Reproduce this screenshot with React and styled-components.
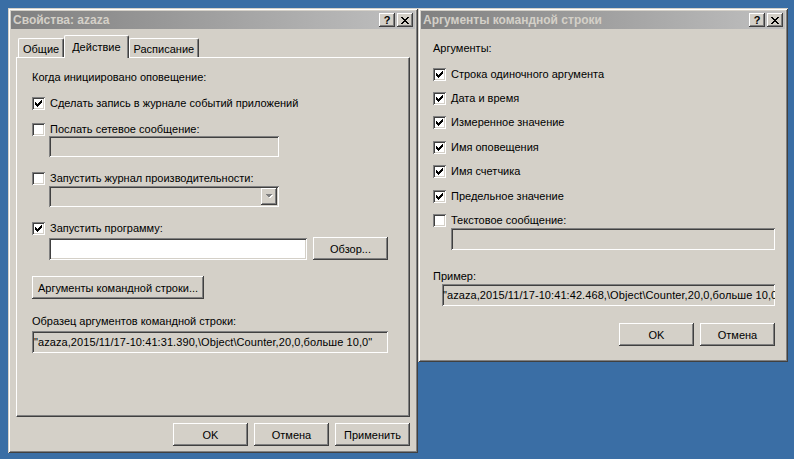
import React from 'react';
import styled, { createGlobalStyle } from 'styled-components';

const FACE = '#d4d0c8';
const RAISED = `inset -1px -1px #404040, inset 1px 1px #ffffff, inset -2px -2px #808080, inset 2px 2px ${FACE}`;
const SUNKEN = `inset 1px 1px #808080, inset -1px -1px #ffffff, inset 2px 2px #404040, inset -2px -2px ${FACE}`;

const GlobalStyle = createGlobalStyle`
  html, body { margin: 0; padding: 0; }
  body {
    background: #3a6ea5;
    font-family: "Liberation Sans", Arial, sans-serif;
    font-size: 11px;
    color: #000;
  }
`;

const Desktop = styled.div`
  display: flex;
  align-items: flex-start;
  width: 794px;
  height: 459px;
  box-sizing: border-box;
  padding: 8px 0 0 8px;
  background: #3a6ea5;
  overflow: hidden;
`;

const Win = styled.div`
  width: ${p => p.$w}px;
  height: ${p => p.$h}px;
  flex-shrink: 0;
  box-sizing: border-box;
  padding: 3px;
  background: ${FACE};
  box-shadow: inset 1px 1px ${FACE}, inset -1px -1px #404040, inset 2px 2px #ffffff, inset -2px -2px #808080;
  display: flex;
  flex-direction: column;
`;

const TitleBar = styled.div`
  height: 18px;
  flex-shrink: 0;
  display: flex;
  align-items: center;
  padding: 0 2px 0 2px;
  background: linear-gradient(to right, #808080, #c0c0c0);
`;

const Title = styled.span`
  flex: 1;
  font-weight: bold;
  font-size: 12px;
  color: ${FACE};
  white-space: nowrap;
`;

const CapButton = styled.div`
  width: 16px;
  height: 14px;
  box-sizing: border-box;
  margin-left: ${p => p.$gap || 0}px;
  background: ${FACE};
  box-shadow: ${RAISED};
  display: flex;
  align-items: center;
  justify-content: center;
  font-weight: bold;
  font-size: 11px;
  line-height: 14px;
`;

const Body = styled.div`
  flex: 1;
  display: flex;
  flex-direction: column;
  align-items: ${p => p.$align || 'stretch'};
  padding: ${p => p.$pad};
`;

const TabStrip = styled.div`
  display: flex;
  align-items: flex-end;
  height: 22px;
  margin-top: 6px;
  padding-left: 2px;
`;

const Tab = styled.div`
  position: relative;
  z-index: ${p => (p.$active ? 2 : 1)};
  box-sizing: border-box;
  height: ${p => (p.$active ? 23 : 19)}px;
  margin-bottom: ${p => (p.$active ? -1 : 0)}px;
  padding: ${p => (p.$active ? '5px 7px 0' : '4px 4px 0')};
  line-height: 13px;
  background: ${FACE};
  border-top: 1px solid #ffffff;
  border-left: 1px solid #ffffff;
  border-right: 1px solid #404040;
  border-radius: 2px 2px 0 0;
  box-shadow: inset -1px 0 #808080;
  white-space: nowrap;
`;

const TabPanel = styled.div`
  height: 360px;
  box-sizing: border-box;
  display: flex;
  flex-direction: column;
  align-items: flex-start;
  padding: 13px 0 0 15px;
  border-top: 1px solid #ffffff;
  border-left: 1px solid #ffffff;
  border-right: 1px solid #404040;
  border-bottom: 1px solid #404040;
  box-shadow: inset -1px -1px #808080;
`;

const Label = styled.div`
  line-height: 13px;
  height: 13px;
  margin-top: ${p => p.$mt || 0}px;
  white-space: nowrap;
`;

const CheckRow = styled.div`
  display: flex;
  align-items: center;
  gap: 5px;
  height: 13px;
  line-height: 13px;
  margin-top: ${p => p.$mt || 0}px;
  white-space: nowrap;
`;

const Box = styled.span`
  width: 13px;
  height: 13px;
  flex-shrink: 0;
  box-sizing: border-box;
  background: #ffffff;
  box-shadow: ${SUNKEN};
  display: flex;
  align-items: center;
  justify-content: center;
`;

const Field = styled.div`
  width: ${p => p.$w}px;
  height: ${p => p.$h || 22}px;
  flex-shrink: 0;
  box-sizing: border-box;
  margin-top: ${p => p.$mt || 0}px;
  margin-left: ${p => p.$indent || 0}px;
  padding: ${p => p.$pad || '0 0 0 2px'};
  background: ${p => (p.$white ? '#ffffff' : FACE)};
  box-shadow: ${SUNKEN};
  display: flex;
  align-items: center;
  justify-content: ${p => p.$justify || 'flex-start'};
  overflow: hidden;
  white-space: nowrap;
  letter-spacing: 0.08px;
`;

const DropButton = styled.div`
  width: 16px;
  height: 100%;
  box-sizing: border-box;
  background: ${FACE};
  box-shadow: ${RAISED};
  display: flex;
  align-items: center;
  justify-content: center;
`;

const Row = styled.div`
  display: flex;
  align-items: center;
  gap: 6px;
  margin-top: ${p => p.$mt || 0}px;
`;

const Button = styled.div`
  width: ${p => p.$w || 75}px;
  height: 23px;
  flex-shrink: 0;
  box-sizing: border-box;
  margin-top: ${p => p.$mt || 0}px;
  background: ${FACE};
  box-shadow: ${RAISED};
  display: flex;
  align-items: center;
  justify-content: center;
  white-space: nowrap;
`;

const ButtonRow = styled.div`
  display: flex;
  justify-content: flex-end;
  gap: 6px;
  align-self: stretch;
  margin-top: ${p => p.$mt || 0}px;
`;

const CheckMark = () => (
  <svg width="7" height="7" viewBox="0 0 7 7" shapeRendering="crispEdges">
    {[2, 3, 4, 3, 2, 1, 0].map((y, x) => (
      <rect key={x} x={x} y={y} width="1" height="3" fill="#000" />
    ))}
  </svg>
);

const CloseGlyph = () => (
  <svg width="8" height="7" viewBox="0 0 8 7" shapeRendering="crispEdges">
    {[[0, 6], [1, 5], [2, 4], [3, 3], [2, 4], [1, 5], [0, 6]].map(([a, b], y) => (
      <g key={y}>
        <rect x={a} y={y} width="2" height="1" fill="#000" />
        {a !== b && <rect x={b} y={y} width="2" height="1" fill="#000" />}
      </g>
    ))}
  </svg>
);

const DownArrow = () => (
  <svg width="8" height="5" viewBox="0 0 8 5" shapeRendering="crispEdges">
    <path d="M1 1h7L4.5 4.5z" fill="#ffffff" />
    <path d="M0 0h7L3.5 3.5z" fill="#808080" />
  </svg>
);

const Check = ({ checked, children, mt }) => (
  <CheckRow $mt={mt}>
    <Box>{checked && <CheckMark />}</Box>
    <span>{children}</span>
  </CheckRow>
);

const Caption = ({ children }) => (
  <TitleBar>
    <Title>{children}</Title>
    <CapButton>?</CapButton>
    <CapButton $gap={2}><CloseGlyph /></CapButton>
  </TitleBar>
);

const PropertiesDialog = () => (
  <Win $w={410} $h={445}>
    <Caption>Свойства: azaza</Caption>
    <Body $pad="0 5px 0 5px">
      <TabStrip>
        <Tab>Общие</Tab>
        <Tab $active>Действие</Tab>
        <Tab>Расписание</Tab>
      </TabStrip>
      <TabPanel>
        <Label>Когда инициировано оповещение:</Label>
        <Check checked mt={13}>Сделать запись в журнале событий приложений</Check>
        <Check mt={13}>Послать сетевое сообщение:</Check>
        <Field $w={230} $h={21} $indent={17} />
        <Check mt={15}>Запустить журнал производительности:</Check>
        <Field $w={230} $h={21} $indent={17} $mt={1} $pad="2px" $justify="flex-end">
          <DropButton><DownArrow /></DropButton>
        </Field>
        <Check checked mt={15}>Запустить программу:</Check>
        <Row $mt={2}>
          <Field $w={258} $indent={17} $white />
          <Button>Обзор...</Button>
        </Row>
        <Button $w={172} $mt={16}>Аргументы командной строки...</Button>
        <Label $mt={16}>Образец аргументов командной строки:</Label>
        <Field $w={356} $mt={3}>"azaza,2015/11/17-10:41:31.390,\Object\Counter,20,0,больше 10,0"</Field>
      </TabPanel>
      <ButtonRow $mt={6}>
        <Button>OK</Button>
        <Button>Отмена</Button>
        <Button>Применить</Button>
      </ButtonRow>
    </Body>
  </Win>
);

const args = [
  { text: 'Строка одиночного аргумента', mt: 13 },
  { text: 'Дата и время', mt: 11 },
  { text: 'Измеренное значение', mt: 11 },
  { text: 'Имя оповещения', mt: 12 },
  { text: 'Имя счетчика', mt: 11 },
  { text: 'Предельное значение', mt: 12 },
];

const ArgumentsDialog = () => (
  <Win $w={370} $h={354}>
    <Caption>Аргументы командной строки</Caption>
    <Body $pad="13px 10px 0 12px" $align="flex-start">
      <Label>Аргументы:</Label>
      {args.map(a => (
        <Check key={a.text} checked mt={a.mt}>{a.text}</Check>
      ))}
      <Check mt={11}>Текстовое сообщение:</Check>
      <Field $w={324} $indent={18} $mt={1} />
      <Label $mt={20}>Пример:</Label>
      <Field $w={333} $indent={9} $mt={1} $pad="0 0 0 1px">"azaza,2015/11/17-10:41:42.468,\Object\Counter,20,0,больше 10,0"</Field>
      <ButtonRow $mt={17}>
        <Button>OK</Button>
        <Button>Отмена</Button>
      </ButtonRow>
    </Body>
  </Win>
);

export default function App() {
  return (
    <>
      <GlobalStyle />
      <Desktop>
        <PropertiesDialog />
        <ArgumentsDialog />
      </Desktop>
    </>
  );
}
